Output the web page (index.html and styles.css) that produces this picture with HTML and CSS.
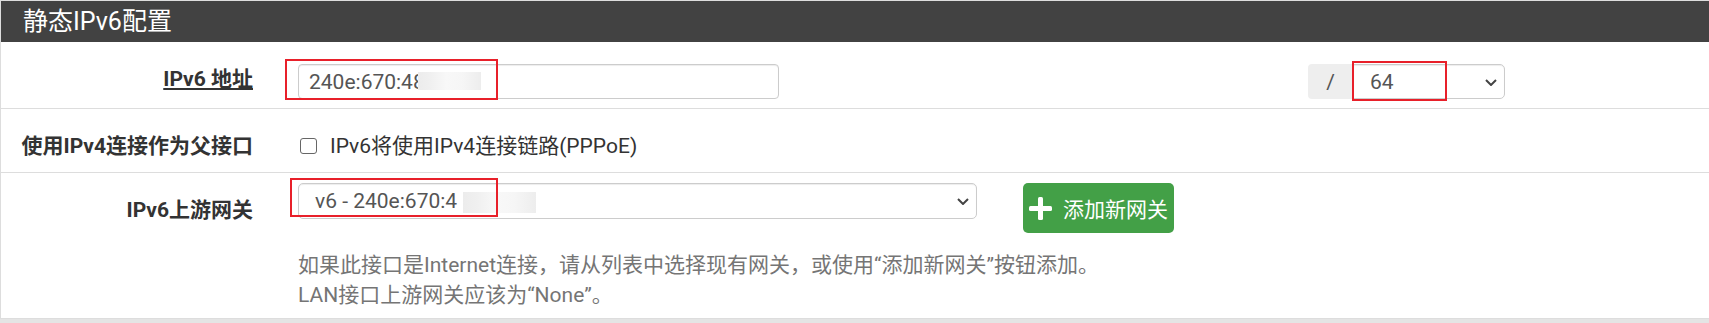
FILE: index.html
```html
<!DOCTYPE html>
<html lang="zh-CN">
<head>
    <meta charset="UTF-8">
    <title>静态IPv6配置</title>
    <link rel="stylesheet" href="styles.css">
</head>
<body>
    <div class="panel">
        <div class="panel-heading">静态IPv6配置</div>

        <div class="form-row row-address">
            <label class="control-label" for="ipaddrv6"><span class="underline">IPv6 地址</span></label>
            <div class="field">
                <input type="text" id="ipaddrv6" class="form-control addr-input" value="240e:670:48">
                <div class="input-group">
                    <span class="addon">/</span>
                    <div class="select-wrap prefix-select">
                        <select class="form-control">
                            <option>64</option>
                        </select>
                        <svg class="chevron" width="12" height="7" viewBox="0 0 12 7"><polyline points="1,1 6,6 11,1"/></svg>
                    </div>
                </div>
            </div>
        </div>

        <div class="form-row row-parent">
            <span class="control-label">使用IPv4连接作为父接口</span>
            <div class="field">
                <label class="checkbox">
                    <input type="checkbox">
                    IPv6将使用IPv4连接链路(PPPoE)
                </label>
            </div>
        </div>

        <div class="form-row row-gateway">
            <label class="control-label" for="gatewayv6">IPv6上游网关</label>
            <div class="field">
                <div class="gateway-line">
                    <div class="select-wrap gateway-select">
                        <select id="gatewayv6" class="form-control">
                            <option>v6 - 240e:670:4</option>
                        </select>
                        <svg class="chevron" width="12" height="7" viewBox="0 0 12 7"><polyline points="1,1 6,6 11,1"/></svg>
                    </div>
                    <button class="btn-success">
                        <svg class="plus" width="23" height="23" viewBox="0 0 23 23">
                            <rect x="0" y="9" width="23" height="5" rx="1.5"/>
                            <rect x="9" y="0" width="5" height="23" rx="1.5"/>
                        </svg>
                        添加新网关
                    </button>
                </div>
                <div class="help-block">
                    如果此接口是Internet连接，请从列表中选择现有网关，或使用“添加新网关”按钮添加。<br>
                    LAN接口上游网关应该为“None”。
                </div>
            </div>
        </div>

        <!-- 打码和红框标注 -->
        <span class="mosaic mosaic-addr"></span>
        <span class="mosaic mosaic-gateway"></span>
        <span class="mark mark-addr"></span>
        <span class="mark mark-prefix"></span>
        <span class="mark mark-gateway"></span>
    </div>
</body>
</html>
```

FILE: styles.css
```css
/* Stile generale */
body {
    margin: 0;
    padding: 0;
    background: #e4e4e4;
    font-family: Roboto, "Noto Sans CJK SC", sans-serif;
    font-size: 21px;
    color: #333;
    overflow: hidden;
}

.panel {
    position: relative;
    background: white;
    border: 1px solid #ddd;
    border-right: none;
}

.panel-heading {
    height: 41px;
    line-height: 41px;
    padding-left: 22px;
    background: #424242;
    color: white;
    font-size: 25px;
}

.form-row {
    display: flex;
    border-bottom: 1px solid #ddd;
}

.control-label {
    width: 252px;
    flex-shrink: 0;
    padding-top: 22px;
    line-height: 30px;
    text-align: right;
    font-weight: bold;
    color: #333;
}

.underline {
    text-decoration: underline;
}

.field {
    margin-left: 45px;
}

.form-control {
    box-sizing: border-box;
    font-family: inherit;
    font-size: 21px;
    color: #555;
    background: white;
    border: 1px solid #ccc;
    border-radius: 4px;
    box-shadow: inset 0 1px 1px rgba(0, 0, 0, 0.075);
    outline: none;
}

/* IPv6 地址 */
.row-address {
    padding-bottom: 9px;
}

.row-address .field {
    display: flex;
    padding-top: 22px;
}

.addr-input {
    width: 481px;
    height: 35px;
    padding: 0 10px;
}

.input-group {
    display: flex;
    margin-left: 529px;
    height: 35px;
}

.addon {
    width: 45px;
    display: flex;
    align-items: center;
    justify-content: center;
    background: #eee;
    color: #555;
    border-radius: 4px 0 0 4px;
}

.select-wrap {
    position: relative;
}

.select-wrap select {
    appearance: none;
    -webkit-appearance: none;
    width: 100%;
    height: 100%;
    padding: 0 30px 0 16px;
}

.prefix-select {
    width: 152px;
}

.prefix-select select {
    border-radius: 0 5px 5px 0;
}

.chevron {
    position: absolute;
    right: 8px;
    top: 50%;
    margin-top: -3px;
    fill: none;
    stroke: #444;
    stroke-width: 2;
}

/* checkbox */
.row-parent {
    padding-bottom: 11px;
}

.row-parent .field {
    padding-top: 22px;
    margin-left: 47px;
}

.checkbox {
    display: flex;
    align-items: center;
    gap: 13px;
    line-height: 30px;
    color: #333;
}

.checkbox input {
    appearance: none;
    -webkit-appearance: none;
    box-sizing: border-box;
    width: 17px;
    height: 16px;
    margin: 0;
    border: 1.5px solid #666;
    border-radius: 3px;
    background: white;
}

/* 上游网关 */
.row-gateway {
    padding-bottom: 8px;
    border-bottom: none;
}

.row-gateway .field {
    padding-top: 10px;
}

.gateway-line {
    display: flex;
    align-items: flex-start;
    gap: 46px;
}

.gateway-select {
    width: 679px;
    height: 36px;
}

.gateway-select select {
    border-radius: 5px;
}

.btn-success {
    display: flex;
    align-items: center;
    gap: 11px;
    height: 50px;
    padding: 0 6px;
    background: #43a047;
    color: white;
    border: none;
    border-radius: 5px;
    font-family: inherit;
    font-size: 21px;
    cursor: pointer;
}

.plus {
    fill: white;
}

.help-block {
    margin-top: 17px;
    line-height: 30px;
    color: #757575;
}

/* 打码 */
.mosaic {
    position: absolute;
    background: linear-gradient(to right, #ececec 0%, #f0f0f0 20%, #f8f8f8 45%, #f6f6f6 70%, #ededed 100%);
}

.mosaic-addr {
    left: 417px;
    top: 71px;
    width: 63px;
    height: 18px;
}

.mosaic-gateway {
    left: 462px;
    top: 191px;
    width: 73px;
    height: 21px;
}

/* 红框 */
.mark {
    position: absolute;
    box-sizing: border-box;
    border: 2px solid #e8202a;
}

.mark-addr {
    left: 284px;
    top: 58px;
    width: 213px;
    height: 41px;
}

.mark-prefix {
    left: 1351px;
    top: 60px;
    width: 95px;
    height: 40px;
}

.mark-gateway {
    left: 289px;
    top: 177px;
    width: 208px;
    height: 39px;
}
```
